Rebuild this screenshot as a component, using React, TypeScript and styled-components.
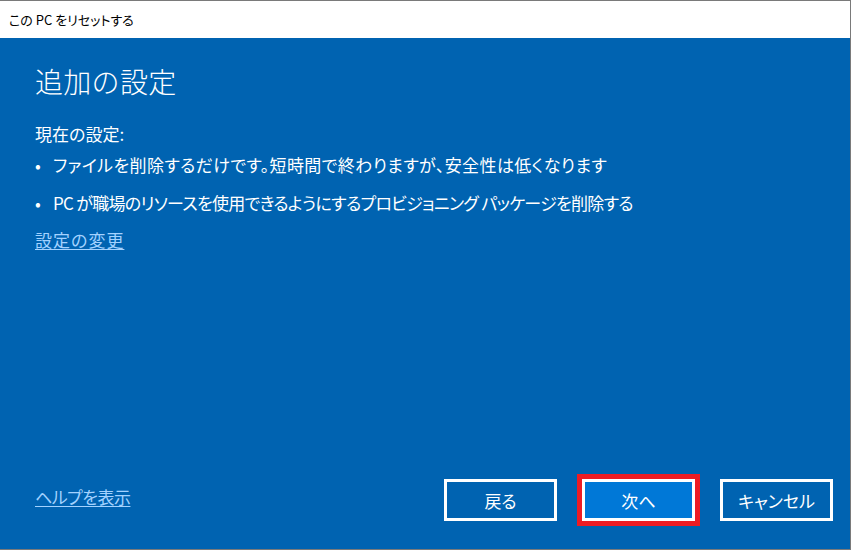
import React from "react";
import styled, { createGlobalStyle } from "styled-components";

const Global = createGlobalStyle`
  html, body { margin: 0; padding: 0; background: #ffffff; }
  body {
    font-family: "Noto Sans CJK JP", "Noto Sans", sans-serif;
    font-feature-settings: "palt";
  }
  * { box-sizing: border-box; }
`;

const Window = styled.div`
  width: 851px;
  height: 550px;
  display: flex;
  flex-direction: column;
  border-top: 1px solid #7a7a7a;
  border-right: 1px solid #7a7a7a;
  border-bottom: 1px solid #7a7a7a;
  background: #0063b1;
  overflow: hidden;
`;

const TitleBar = styled.div`
  height: 37px;
  flex: none;
  display: flex;
  align-items: center;
  padding-left: 9px;
  background: #ffffff;
  color: #000000;
  font-size: 13px;
  line-height: 1;
`;

const Content = styled.div`
  flex: 1;
  display: flex;
  flex-direction: column;
  padding: 24px 17px 28px 35px;
  color: #ffffff;
`;

const Body = styled.div`
  flex: 1;
  display: flex;
  flex-direction: column;
`;

const Heading = styled.h1`
  margin: 0;
  font-size: 28px;
  font-weight: 300;
  line-height: 39px;
  font-feature-settings: normal;
  letter-spacing: 0.3px;
`;

const Subtitle = styled.div`
  margin-top: 22px;
  font-size: 17px;
  line-height: 22px;
`;

const List = styled.ul`
  margin: 9px 0 0;
  padding: 0;
  list-style: none;
  display: flex;
  flex-direction: column;
  gap: 16px;
`;

const Item = styled.li<{ $tracking?: number }>`
  display: flex;
  font-size: 17px;
  line-height: 22px;
  letter-spacing: ${(p) => p.$tracking ?? 0}px;
`;

const Bullet = styled.span`
  width: 18px;
  flex: none;
  letter-spacing: 0;
`;

const Link = styled.a<{ $top?: number; $tracking?: number }>`
  margin-top: ${(p) => p.$top ?? 0}px;
  align-self: flex-start;
  font-size: 17px;
  line-height: 22px;
  letter-spacing: ${(p) => p.$tracking ?? 0}px;
  color: #a3d2ff;
  text-decoration: underline;
  text-underline-offset: 2px;
  cursor: pointer;
`;

const HelpLink = styled(Link)`
  align-self: center;
  margin-bottom: 6px;
`;

const Footer = styled.div`
  flex: none;
  display: flex;
  align-items: center;
  justify-content: space-between;
`;

const Buttons = styled.div`
  display: flex;
  gap: 25px;
`;

const Button = styled.button<{ $primary?: boolean; $highlight?: boolean }>`
  width: 113px;
  height: 42px;
  border: 3px solid #ffffff;
  background: ${(p) => (p.$primary ? "#0078d7" : "transparent")};
  color: #ffffff;
  font-family: "Noto Sans CJK JP", "Noto Sans", sans-serif;
  font-feature-settings: "palt";
  font-size: 17px;
  padding: 0;
  outline: ${(p) => (p.$highlight ? "5px solid #ed1c24" : "none")};
  outline-offset: 0;
`;

export default function App() {
  return (
    <>
      <Global />
      <Window>
        <TitleBar>この PC をリセットする</TitleBar>
        <Content>
          <Body>
            <Heading>追加の設定</Heading>
            <Subtitle>現在の設定:</Subtitle>
            <List>
              <Item $tracking={0.4}>
                <Bullet>•</Bullet>
                <span>ファイルを削除するだけです。短時間で終わりますが、安全性は低くなります</span>
              </Item>
              <Item $tracking={-0.7}>
                <Bullet>•</Bullet>
                <span>PC が職場のリソースを使用できるようにするプロビジョニング パッケージを削除する</span>
              </Item>
            </List>
            <Link $top={15} $tracking={1}>設定の変更</Link>
          </Body>
          <Footer>
            <HelpLink $tracking={-0.5}>ヘルプを表示</HelpLink>
            <Buttons>
              <Button>戻る</Button>
              <Button $primary $highlight>次へ</Button>
              <Button>キャンセル</Button>
            </Buttons>
          </Footer>
        </Content>
      </Window>
    </>
  );
}
